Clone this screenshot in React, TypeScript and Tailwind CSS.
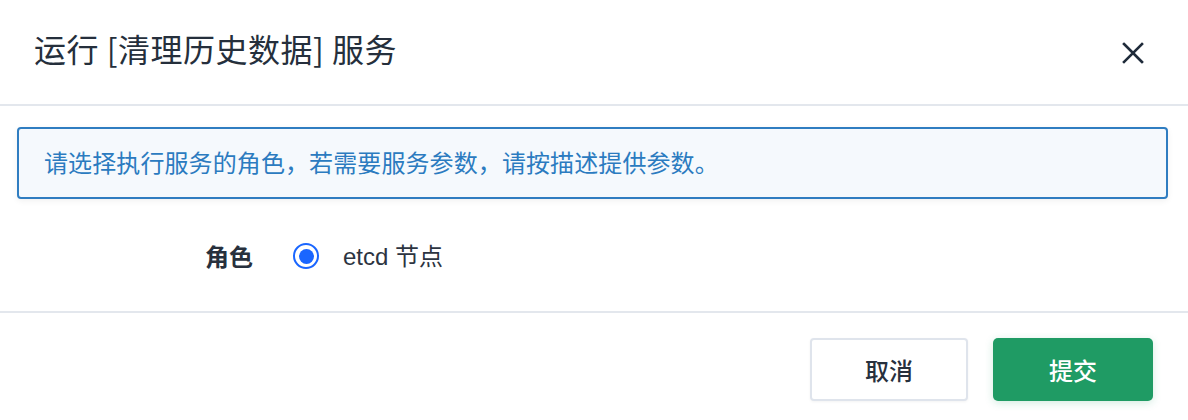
import React from "react";

export default function App() {
  const font = { fontFamily: '"Noto Sans CJK SC", "Noto Sans", sans-serif' };
  return (
    <div className="w-[1188px] h-[420px] bg-white flex flex-col" style={font}>
      <div className="h-[104px] flex items-center justify-between pl-[34px] pr-[44px] shrink-0">
        <div className="text-[32px] leading-none tracking-[0.5px] text-[#252f3c] pb-[8px]">运行 [清理历史数据] 服务</div>
        <svg width="22" height="22" viewBox="0 0 22 22" className="mt-[2px]">
          <path d="M2 2 L20 20 M20 2 L2 20" stroke="#1f2b3a" strokeWidth="2.6" strokeLinecap="square" />
        </svg>
      </div>
      <div className="h-[2px] bg-[#e3e7ed] shrink-0" />
      <div className="pt-[21px] pl-[17px] pr-[20px]">
        <div className="h-[72px] border-2 border-[#2f7dc1] bg-[#f5f9fd] rounded-[4px] flex items-center pl-[25px] shadow-[0_2px_6px_rgba(0,0,0,0.06)]">
          <span className="text-[24px] leading-none tracking-[0.1px] text-[#2b7bc0] pb-[2px]">请选择执行服务的角色，若需要服务参数，请按描述提供参数。</span>
        </div>
      </div>
      <div className="h-[112px] flex items-center pl-[205px] pt-[2px]">
        <span className="text-[24px] font-bold leading-none text-[#27303d] w-[88px]">角色</span>
        <span className="w-[26px] h-[26px] rounded-full border-[2.5px] border-[#1a66ff] flex items-center justify-center">
          <span className="w-[15px] h-[15px] rounded-full bg-[#1a66ff]" />
        </span>
        <span className="ml-[24px] text-[24px] leading-none text-[#2c3441]">
          <span style={{ fontFamily: '"Liberation Sans", Arial, sans-serif' }}>etcd </span>节点
        </span>
      </div>
      <div className="h-[2px] bg-[#e3e7ed] shrink-0" />
      <div className="flex justify-end pt-[25px] pr-[35px] gap-[25px]">
        <button className="w-[158px] h-[63px] rounded-[4px] border-2 border-[#dfe4ec] bg-white text-[24px] font-medium text-[#27303d] shadow-[0_1px_3px_rgba(0,0,0,0.05)]">
          取消
        </button>
        <button className="w-[160px] h-[63px] rounded-[5px] bg-[#1f9b64] text-[24px] font-medium text-white shadow-[0_2px_8px_rgba(31,155,100,0.2)]">
          提交
        </button>
      </div>
    </div>
  );
}
